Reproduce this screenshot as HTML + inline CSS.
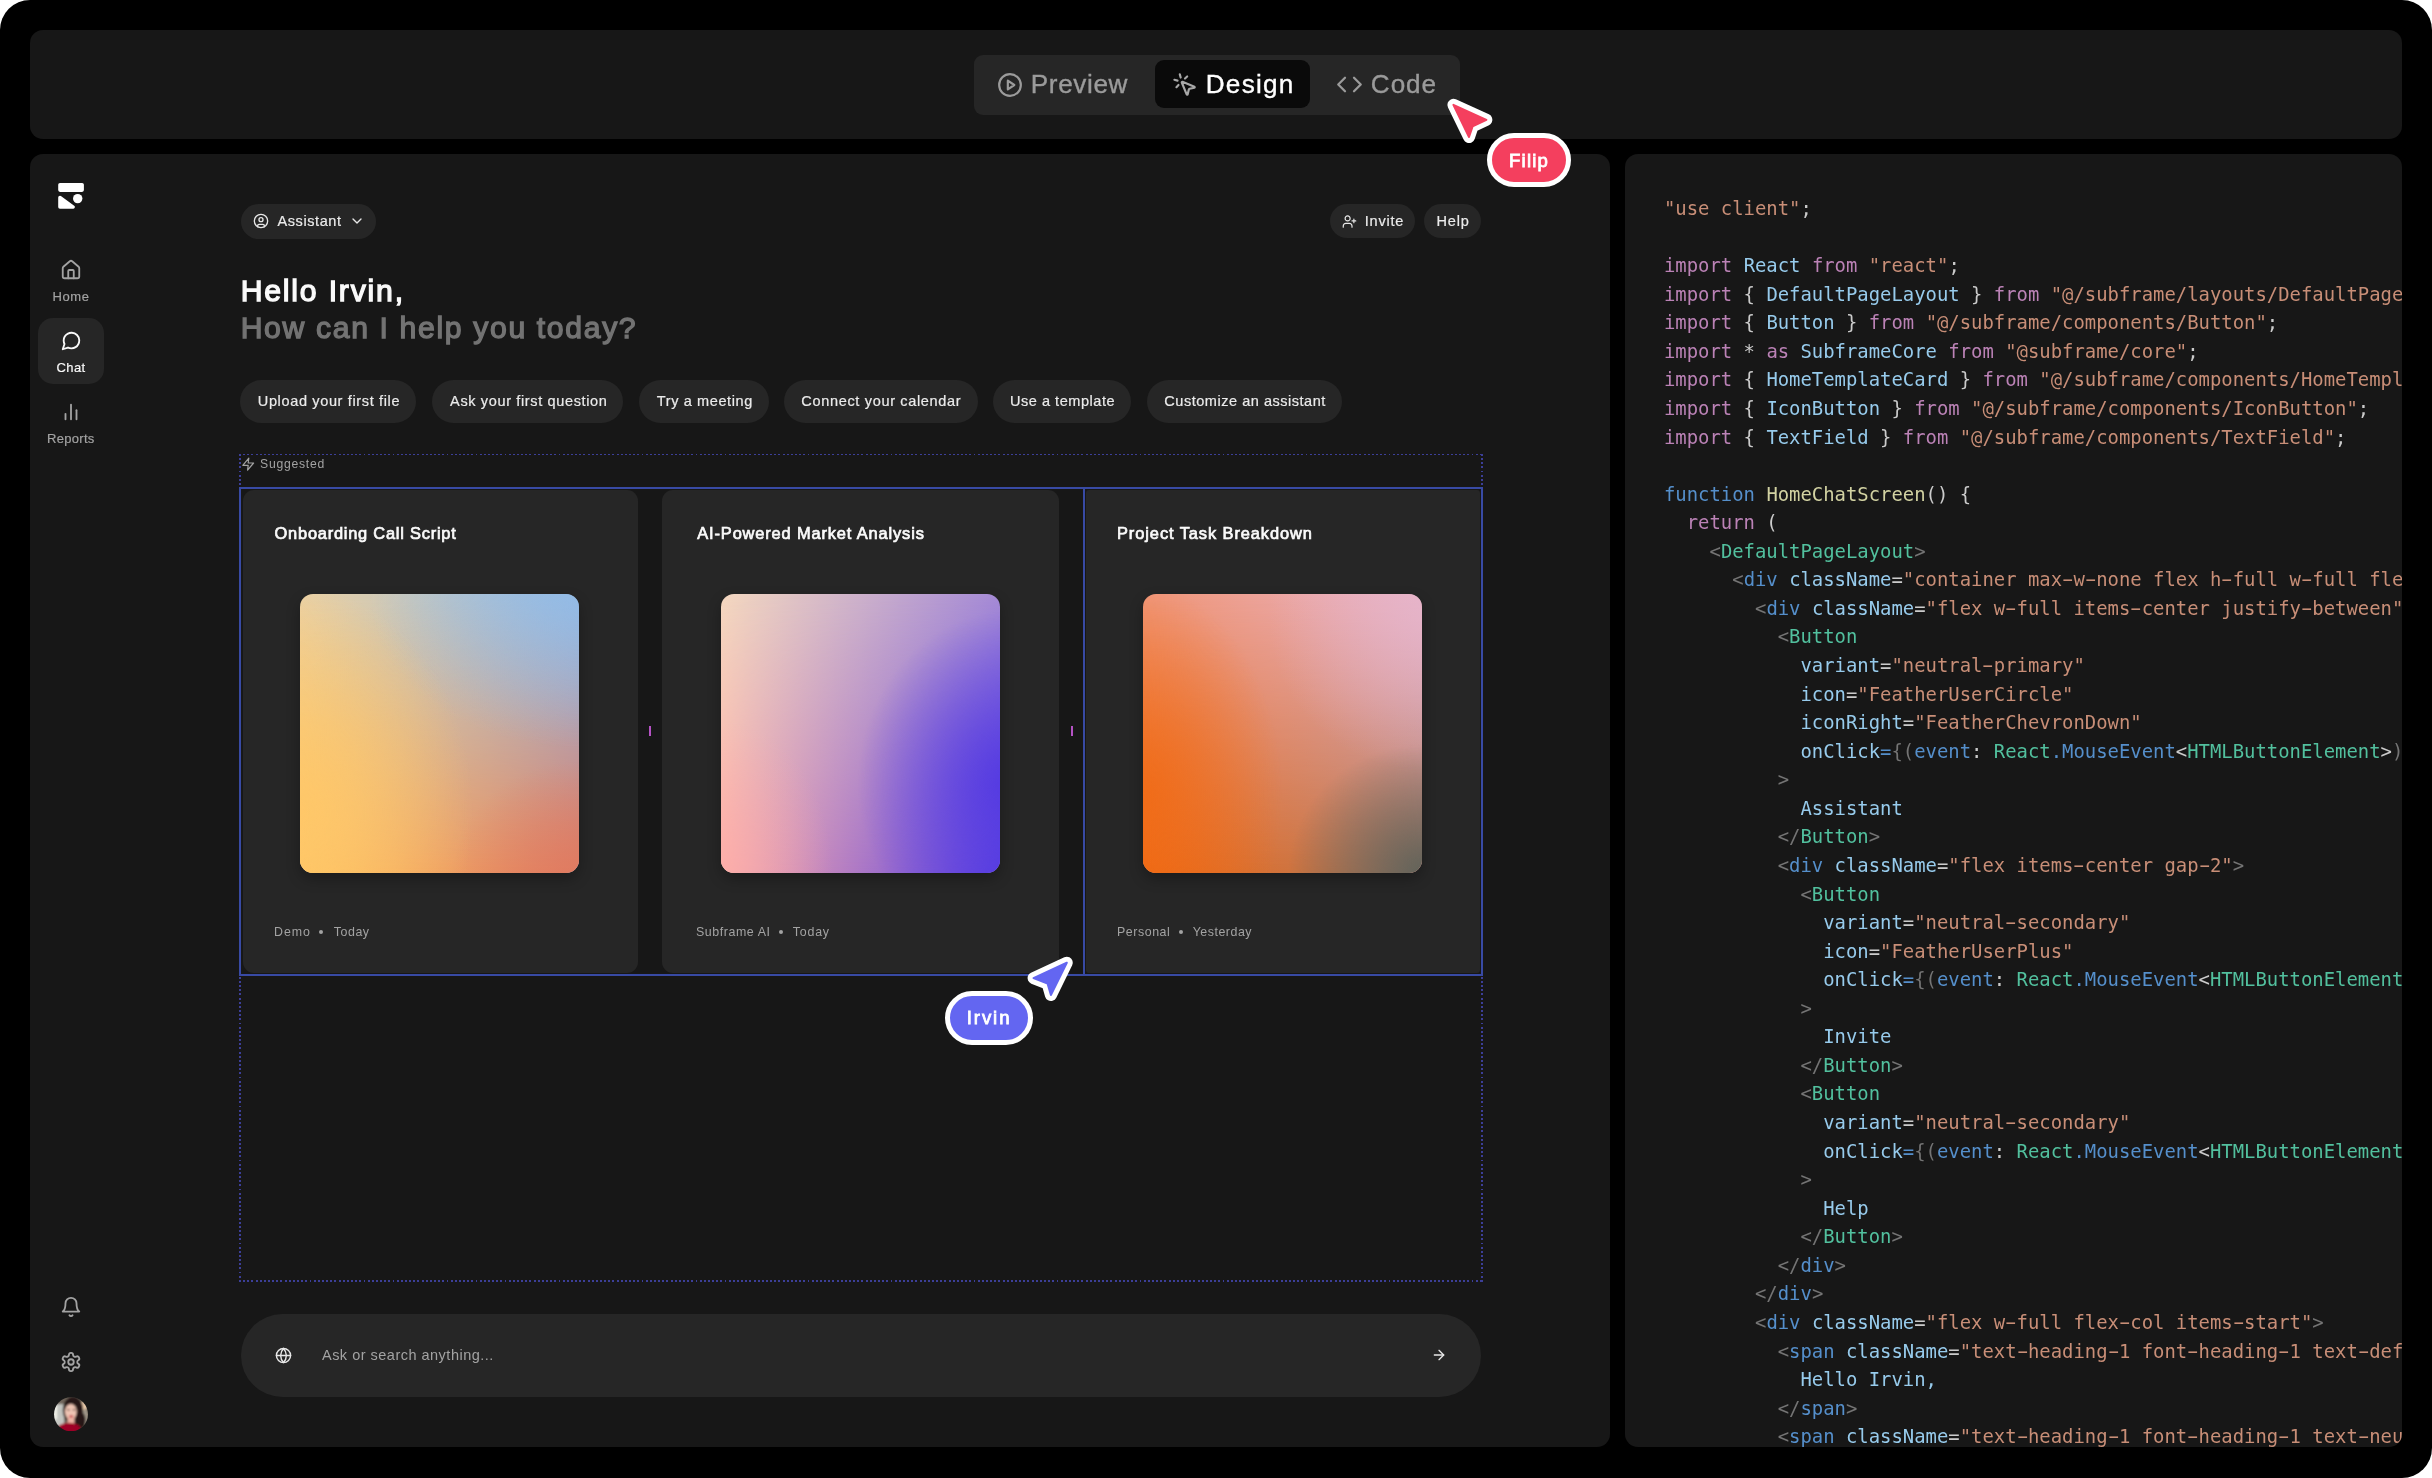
<!DOCTYPE html>
<html lang="en">
<head>
<meta charset="utf-8">
<title>Subframe – Design</title>
<style>
*{box-sizing:border-box;margin:0;padding:0}
html,body{width:2432px;height:1478px;overflow:hidden;background:#fff}
body{font-family:"Liberation Sans", sans-serif;position:relative;-webkit-font-smoothing:antialiased}
.abs,.ic,.t{position:absolute}
.t{white-space:nowrap;line-height:1em;display:block}
#texts{position:absolute;left:0;top:0;width:2432px;height:1478px;will-change:transform}
.frame{left:0;top:0;width:2432px;height:1478px;background:#000;border-radius:30px}
.panel{background:#171717;border-radius:13px}
.pill{background:#262626;border-radius:999px}
.card{background:#262626;border-radius:11px;top:490px;height:483px}
.img{top:593.7px;width:279.3px;height:279px;border-radius:13px;overflow:hidden;box-shadow:0 6px 14px rgba(0,0,0,.28)}
.img i{position:absolute;inset:0;display:block}
.sel{border:2.6px solid #384aa4}
.dot{width:4px;height:4px;border-radius:50%;background:#a3a3a3;top:929.5px}
.codewrap{left:1625px;top:154px;width:777px;height:1293px;overflow:hidden;border-radius:13px;background:#171717}
.code{position:absolute;left:39px;top:39.76px;font-family:"DejaVu Sans Mono", "Liberation Mono", monospace;font-size:18.9px;line-height:28.575px;color:#cbcbcb;will-change:transform}
.cl{height:28.575px;white-space:pre}
.h{display:inline-block;font-style:normal;transform:scaleX(1.8)}
</style>
</head>
<body>
<div class="abs frame"></div>

<!-- top bar -->
<div class="abs panel" style="left:30px;top:30px;width:2372px;height:108.5px"></div>
<div class="abs" style="left:974px;top:55px;width:486px;height:59.5px;background:#262626;border-radius:9px"></div>
<div class="abs" style="left:1155px;top:60px;width:155px;height:48px;background:#0a0a0a;border-radius:9px"></div>

<!-- main design panel -->
<div class="abs panel" style="left:30px;top:154px;width:1580px;height:1293px"></div>

<!-- sidebar -->
<svg class="abs" style="left:58px;top:183px;width:26px;height:26px" viewBox="0 0 26 26">
  <rect x="0.2" y="0" width="25.7" height="8.9" rx="1.8" fill="#fff"/>
  <path d="M1.9 14.4 L15.2 24.1 L1.9 24.1 Z" fill="#fff" stroke="#fff" stroke-width="3.4" stroke-linejoin="round"/>
  <circle cx="19.7" cy="15.6" r="4.7" fill="#fff"/>
</svg>
<div class="abs" style="left:37.5px;top:317.5px;width:66px;height:66.5px;background:#262626;border-radius:15px"></div>

<!-- avatar -->
<svg class="abs" style="left:53.7px;top:1396.6px;width:34px;height:34.4px" viewBox="0 0 34 34">
  <defs><clipPath id="avc"><circle cx="17" cy="17" r="17"/></clipPath><filter id="avb" x="-20%" y="-20%" width="140%" height="140%"><feGaussianBlur stdDeviation="1.1"/></filter></defs>
  <g clip-path="url(#avc)"><g filter="url(#avb)">
    <rect x="-4" y="-4" width="42" height="42" fill="#6f655a"/>
    <rect x="-2" y="7" width="12" height="22" fill="#c4c6c1"/>
    <rect x="0" y="8" width="3" height="14" fill="#f2f2ea"/>
    <ellipse cx="29.5" cy="8.5" rx="4" ry="4.5" fill="#eccdad"/>
    <ellipse cx="31" cy="20" rx="3" ry="8" fill="#a39a8c"/>
    <ellipse cx="19" cy="13" rx="10.2" ry="13.6" fill="#261815"/>
    <ellipse cx="26" cy="23" rx="5.5" ry="9" fill="#261815"/>
    <ellipse cx="16.8" cy="14.6" rx="5.9" ry="7.8" fill="#f0c5b4"/>
    <rect x="13.5" y="20" width="7" height="7.5" fill="#eeb4a4"/>
    <ellipse cx="14.4" cy="12.6" rx="1.5" ry="0.7" fill="#5a3d33"/>
    <ellipse cx="20" cy="12.6" rx="1.5" ry="0.7" fill="#5a3d33"/>
    <ellipse cx="17.2" cy="19.2" rx="2.3" ry="1.1" fill="#c9454f"/>
    <ellipse cx="15" cy="32.5" rx="12" ry="7" fill="#9e0028"/>
  </g></g>
</svg>

<!-- header buttons -->
<div class="abs pill" style="left:240.6px;top:204px;width:135.6px;height:34.6px"></div>
<div class="abs pill" style="left:1330.3px;top:204.3px;width:85px;height:33.8px"></div>
<div class="abs pill" style="left:1424.2px;top:204.3px;width:56.6px;height:33.8px"></div>

<!-- chips -->
<div class="abs pill" style="left:240.2px;top:380px;width:176px;height:42.6px"></div>
<div class="abs pill" style="left:432.2px;top:380px;width:191px;height:42.6px"></div>
<div class="abs pill" style="left:639.2px;top:380px;width:129.5px;height:42.6px"></div>
<div class="abs pill" style="left:784.2px;top:380px;width:193.5px;height:42.6px"></div>
<div class="abs pill" style="left:993.2px;top:380px;width:138px;height:42.6px"></div>
<div class="abs pill" style="left:1147.2px;top:380px;width:195px;height:42.6px"></div>

<!-- dotted selection outline -->
<div class="abs" style="left:239px;top:453.95px;width:1243.7px;height:1.5px;background:repeating-linear-gradient(90deg,#3c3f98 0 1.9px,transparent 1.9px 4.15px)"></div>
<div class="abs" style="left:239px;top:1280.25px;width:1243.7px;height:1.5px;background:repeating-linear-gradient(90deg,#3c3f98 0 1.9px,transparent 1.9px 4.15px)"></div>
<div class="abs" style="left:239.05px;top:454px;width:1.5px;height:827.5px;background:repeating-linear-gradient(180deg,#3c3f98 0 1.9px,transparent 1.9px 4.15px)"></div>
<div class="abs" style="left:1481.15px;top:454px;width:1.5px;height:827.5px;background:repeating-linear-gradient(180deg,#3c3f98 0 1.9px,transparent 1.9px 4.15px)"></div>

<!-- cards -->
<div class="abs card" style="left:242.5px;width:395.5px"></div>
<div class="abs card" style="left:662px;width:397px"></div>
<div class="abs card" style="left:1086px;width:394px;border-radius:3px;top:490.2px;height:482.6px"></div>

<div class="abs img" style="left:299.5px">
  <i style="background:linear-gradient(90deg,#ebd1a4,#93bbe6)"></i>
  <i style="background:linear-gradient(90deg,#ffc662,#e07c62);-webkit-mask-image:linear-gradient(180deg,transparent,#000);mask-image:linear-gradient(180deg,transparent,#000)"></i>
  <i style="background:radial-gradient(ellipse 62% 80% at 0% 78%,rgba(255,199,104,.95),rgba(255,199,104,0) 100%),radial-gradient(ellipse 75% 55% at 100% 0%,rgba(147,187,230,.75),rgba(147,187,230,0) 100%),radial-gradient(ellipse 45% 40% at 100% 100%,rgba(224,122,96,.7),rgba(224,122,96,0) 100%)"></i>
</div>
<div class="abs img" style="left:721.1px">
  <i style="background:linear-gradient(90deg,#f4d8c0,#a58ad6)"></i>
  <i style="background:linear-gradient(90deg,#fdaea9,#5a40e2);-webkit-mask-image:linear-gradient(180deg,transparent,#000);mask-image:linear-gradient(180deg,transparent,#000)"></i>
  <i style="background:radial-gradient(ellipse 55% 62% at 104% 68%,rgba(82,56,226,.95),rgba(82,56,226,0) 100%),radial-gradient(ellipse 40% 55% at 0% 100%,rgba(253,174,169,.6),rgba(253,174,169,0) 100%)"></i>
</div>
<div class="abs img" style="left:1143.1px">
  <i style="background:linear-gradient(90deg,#f09678,#e8b5ca)"></i>
  <i style="background:linear-gradient(90deg,#f06a14,#b07a62);-webkit-mask-image:linear-gradient(180deg,transparent,#000);mask-image:linear-gradient(180deg,transparent,#000)"></i>
  <i style="background:radial-gradient(ellipse 48% 46% at 100% 100%,rgba(98,99,90,1),rgba(98,99,90,0) 100%),radial-gradient(ellipse 50% 75% at 0% 72%,rgba(240,106,20,.85),rgba(240,106,20,0) 100%),radial-gradient(ellipse 55% 55% at 100% 8%,rgba(230,180,202,.7),rgba(230,180,202,0) 100%)"></i>
</div>

<div class="abs dot" style="left:318.5px"></div>
<div class="abs dot" style="left:778.5px"></div>
<div class="abs dot" style="left:1179px"></div>

<!-- selection rectangles -->
<div class="abs sel" style="left:238.9px;top:487.2px;width:846.6px;height:488.8px"></div>
<div class="abs sel" style="left:1082.9px;top:487.2px;width:400.1px;height:488.8px"></div>
<div class="abs" style="left:649px;top:726px;width:2px;height:10px;background:#b552c4"></div>
<div class="abs" style="left:1071px;top:726px;width:2px;height:10px;background:#b552c4"></div>

<!-- input -->
<div class="abs pill" style="left:241px;top:1314px;width:1240px;height:83px"></div>

<!-- code panel -->
<div class="abs codewrap"><div class="code">
<div class="cl"><span style="color:#c88e77">"use client"</span>;</div>
<div class="cl">&nbsp;</div>
<div class="cl"><span style="color:#bb82b6">import</span> <span style="color:#97cbec">React</span> <span style="color:#bb82b6">from</span> <span style="color:#c88e77">"react"</span>;</div>
<div class="cl"><span style="color:#bb82b6">import</span> { <span style="color:#97cbec">DefaultPageLayout</span> } <span style="color:#bb82b6">from</span> <span style="color:#c88e77">"@/subframe/layouts/DefaultPageLayout"</span>;</div>
<div class="cl"><span style="color:#bb82b6">import</span> { <span style="color:#97cbec">Button</span> } <span style="color:#bb82b6">from</span> <span style="color:#c88e77">"@/subframe/components/Button"</span>;</div>
<div class="cl"><span style="color:#bb82b6">import</span> * <span style="color:#bb82b6">as</span> <span style="color:#97cbec">SubframeCore</span> <span style="color:#bb82b6">from</span> <span style="color:#c88e77">"@subframe/core"</span>;</div>
<div class="cl"><span style="color:#bb82b6">import</span> { <span style="color:#97cbec">HomeTemplateCard</span> } <span style="color:#bb82b6">from</span> <span style="color:#c88e77">"@/subframe/components/HomeTemplateCard"</span>;</div>
<div class="cl"><span style="color:#bb82b6">import</span> { <span style="color:#97cbec">IconButton</span> } <span style="color:#bb82b6">from</span> <span style="color:#c88e77">"@/subframe/components/IconButton"</span>;</div>
<div class="cl"><span style="color:#bb82b6">import</span> { <span style="color:#97cbec">TextField</span> } <span style="color:#bb82b6">from</span> <span style="color:#c88e77">"@/subframe/components/TextField"</span>;</div>
<div class="cl">&nbsp;</div>
<div class="cl"><span style="color:#558fcb">function</span> <span style="color:#d2d2a2">HomeChatScreen</span>() {</div>
<div class="cl">  <span style="color:#bb82b6">return</span> (</div>
<div class="cl">    <span style="color:#747474">&lt;</span><span style="color:#52c09e">DefaultPageLayout</span><span style="color:#747474">&gt;</span></div>
<div class="cl">      <span style="color:#747474">&lt;</span><span style="color:#558fcb">div</span> <span style="color:#97cbec">className</span>=<span style="color:#c88e77">"container max<i class="h">-</i>w<i class="h">-</i>none flex h<i class="h">-</i>full w<i class="h">-</i>full flex<i class="h">-</i>col items<i class="h">-</i>start gap<i class="h">-</i>6"</span><span style="color:#747474">&gt;</span></div>
<div class="cl">        <span style="color:#747474">&lt;</span><span style="color:#558fcb">div</span> <span style="color:#97cbec">className</span>=<span style="color:#c88e77">"flex w<i class="h">-</i>full items<i class="h">-</i>center justify<i class="h">-</i>between"</span><span style="color:#747474">&gt;</span></div>
<div class="cl">          <span style="color:#747474">&lt;</span><span style="color:#52c09e">Button</span></div>
<div class="cl">            <span style="color:#97cbec">variant</span>=<span style="color:#c88e77">"neutral<i class="h">-</i>primary"</span></div>
<div class="cl">            <span style="color:#97cbec">icon</span>=<span style="color:#c88e77">"FeatherUserCircle"</span></div>
<div class="cl">            <span style="color:#97cbec">iconRight</span>=<span style="color:#c88e77">"FeatherChevronDown"</span></div>
<div class="cl">            <span style="color:#97cbec">onClick</span><span style="color:#558fcb">=</span><span style="color:#747474">{(</span><span style="color:#558fcb">event</span>: <span style="color:#52c09e">React</span><span style="color:#558fcb">.MouseEvent</span>&lt;<span style="color:#52c09e">HTMLButtonElement</span>&gt;<span style="color:#747474">)</span> <span style="color:#558fcb">=&gt;</span> <span style="color:#747474">{}}</span></div>
<div class="cl">          <span style="color:#747474">&gt;</span></div>
<div class="cl">            <span style="color:#97cbec">Assistant</span></div>
<div class="cl">          <span style="color:#747474">&lt;/</span><span style="color:#52c09e">Button</span><span style="color:#747474">&gt;</span></div>
<div class="cl">          <span style="color:#747474">&lt;</span><span style="color:#558fcb">div</span> <span style="color:#97cbec">className</span>=<span style="color:#c88e77">"flex items<i class="h">-</i>center gap<i class="h">-</i>2"</span><span style="color:#747474">&gt;</span></div>
<div class="cl">            <span style="color:#747474">&lt;</span><span style="color:#52c09e">Button</span></div>
<div class="cl">              <span style="color:#97cbec">variant</span>=<span style="color:#c88e77">"neutral<i class="h">-</i>secondary"</span></div>
<div class="cl">              <span style="color:#97cbec">icon</span>=<span style="color:#c88e77">"FeatherUserPlus"</span></div>
<div class="cl">              <span style="color:#97cbec">onClick</span><span style="color:#558fcb">=</span><span style="color:#747474">{(</span><span style="color:#558fcb">event</span>: <span style="color:#52c09e">React</span><span style="color:#558fcb">.MouseEvent</span>&lt;<span style="color:#52c09e">HTMLButtonElement</span>&gt;<span style="color:#747474">)</span> <span style="color:#558fcb">=&gt;</span> <span style="color:#747474">{}}</span></div>
<div class="cl">            <span style="color:#747474">&gt;</span></div>
<div class="cl">              <span style="color:#97cbec">Invite</span></div>
<div class="cl">            <span style="color:#747474">&lt;/</span><span style="color:#52c09e">Button</span><span style="color:#747474">&gt;</span></div>
<div class="cl">            <span style="color:#747474">&lt;</span><span style="color:#52c09e">Button</span></div>
<div class="cl">              <span style="color:#97cbec">variant</span>=<span style="color:#c88e77">"neutral<i class="h">-</i>secondary"</span></div>
<div class="cl">              <span style="color:#97cbec">onClick</span><span style="color:#558fcb">=</span><span style="color:#747474">{(</span><span style="color:#558fcb">event</span>: <span style="color:#52c09e">React</span><span style="color:#558fcb">.MouseEvent</span>&lt;<span style="color:#52c09e">HTMLButtonElement</span>&gt;<span style="color:#747474">)</span> <span style="color:#558fcb">=&gt;</span> <span style="color:#747474">{}}</span></div>
<div class="cl">            <span style="color:#747474">&gt;</span></div>
<div class="cl">              <span style="color:#97cbec">Help</span></div>
<div class="cl">            <span style="color:#747474">&lt;/</span><span style="color:#52c09e">Button</span><span style="color:#747474">&gt;</span></div>
<div class="cl">          <span style="color:#747474">&lt;/</span><span style="color:#558fcb">div</span><span style="color:#747474">&gt;</span></div>
<div class="cl">        <span style="color:#747474">&lt;/</span><span style="color:#558fcb">div</span><span style="color:#747474">&gt;</span></div>
<div class="cl">        <span style="color:#747474">&lt;</span><span style="color:#558fcb">div</span> <span style="color:#97cbec">className</span>=<span style="color:#c88e77">"flex w<i class="h">-</i>full flex<i class="h">-</i>col items<i class="h">-</i>start"</span><span style="color:#747474">&gt;</span></div>
<div class="cl">          <span style="color:#747474">&lt;</span><span style="color:#558fcb">span</span> <span style="color:#97cbec">className</span>=<span style="color:#c88e77">"text<i class="h">-</i>heading<i class="h">-</i>1 font<i class="h">-</i>heading<i class="h">-</i>1 text<i class="h">-</i>default<i class="h">-</i>font"</span><span style="color:#747474">&gt;</span></div>
<div class="cl">            <span style="color:#97cbec">Hello Irvin,</span></div>
<div class="cl">          <span style="color:#747474">&lt;/</span><span style="color:#558fcb">span</span><span style="color:#747474">&gt;</span></div>
<div class="cl">          <span style="color:#747474">&lt;</span><span style="color:#558fcb">span</span> <span style="color:#97cbec">className</span>=<span style="color:#c88e77">"text<i class="h">-</i>heading<i class="h">-</i>1 font<i class="h">-</i>heading<i class="h">-</i>1 text<i class="h">-</i>neutral<i class="h">-</i>500"</span><span style="color:#747474">&gt;</span></div>
</div></div>

<svg class="ic" style="left:997.30px;top:71.60px;width:26px;height:26px" viewBox="0 0 24 24" fill="none" stroke="#9b9b9b" stroke-width="2" stroke-linecap="round" stroke-linejoin="round" ><circle cx="12" cy="12" r="10"/><path d="m10 8 6 4-6 4z"/></svg>
<svg class="ic" style="left:1171.50px;top:71.90px;width:26px;height:26px" viewBox="0 0 24 24" fill="none" stroke="#a8a8a8" stroke-width="2" stroke-linecap="round" stroke-linejoin="round" ><path d="M14 4.1 12 6"/><path d="m5.1 8-2.9-.8"/><path d="m6 12-1.9 2"/><path d="M7.2 2.2 8 5.1"/><path d="M9.037 9.69a.498.498 0 0 1 .653-.653l11 4.5a.5.5 0 0 1-.074.949l-4.349 1.041a1 1 0 0 0-.74.739l-1.04 4.35a.5.5 0 0 1-.95.074z"/></svg>
<svg class="ic" style="left:1335.70px;top:70.50px;width:27px;height:27px" viewBox="0 0 24 24" fill="none" stroke="#9b9b9b" stroke-width="2" stroke-linecap="round" stroke-linejoin="round" ><path d="m16 18 6-6-6-6"/><path d="m8 6-6 6 6 6"/></svg>
<svg class="ic" style="left:60.00px;top:258.50px;width:22px;height:22px" viewBox="0 0 24 24" fill="none" stroke="#a3a3a3" stroke-width="2" stroke-linecap="round" stroke-linejoin="round" ><path d="M15 21v-8a1 1 0 0 0-1-1h-4a1 1 0 0 0-1 1v8"/><path d="M3 10a2 2 0 0 1 .709-1.528l7-5.999a2 2 0 0 1 2.582 0l7 5.999A2 2 0 0 1 21 10v9a2 2 0 0 1-2 2H5a2 2 0 0 1-2-2z"/></svg>
<svg class="ic" style="left:60.00px;top:329.70px;width:22px;height:22px" viewBox="0 0 24 24" fill="none" stroke="#fafafa" stroke-width="2" stroke-linecap="round" stroke-linejoin="round" ><path d="M21 11.5a8.38 8.38 0 0 1-.9 3.8 8.5 8.5 0 0 1-7.6 4.7 8.38 8.38 0 0 1-3.8-.9L3 21l1.9-5.7a8.38 8.38 0 0 1-.9-3.8 8.5 8.5 0 0 1 4.7-7.6 8.38 8.38 0 0 1 3.8-.9h.5a8.48 8.48 0 0 1 8 8v.5z"/></svg>
<svg class="ic" style="left:60.00px;top:400.60px;width:22px;height:22px" viewBox="0 0 24 24" fill="none" stroke="#a3a3a3" stroke-width="2" stroke-linecap="round" stroke-linejoin="round" ><path d="M18 20V10"/><path d="M12 20V4"/><path d="M6 20v-6"/></svg>
<svg class="ic" style="left:59.50px;top:1296.00px;width:22px;height:22px" viewBox="0 0 24 24" fill="none" stroke="#a3a3a3" stroke-width="2" stroke-linecap="round" stroke-linejoin="round" ><path d="M6 8a6 6 0 0 1 12 0c0 7 3 9 3 9H3s3-2 3-9"/><path d="M10.3 21a1.94 1.94 0 0 0 3.4 0"/></svg>
<svg class="ic" style="left:59.50px;top:1350.50px;width:22px;height:22px" viewBox="0 0 24 24" fill="none" stroke="#a3a3a3" stroke-width="2" stroke-linecap="round" stroke-linejoin="round" ><path d="M12.22 2h-.44a2 2 0 0 0-2 2v.18a2 2 0 0 1-1 1.73l-.43.25a2 2 0 0 1-2 0l-.15-.08a2 2 0 0 0-2.73.73l-.22.38a2 2 0 0 0 .73 2.73l.15.1a2 2 0 0 1 1 1.72v.51a2 2 0 0 1-1 1.74l-.15.09a2 2 0 0 0-.73 2.73l.22.38a2 2 0 0 0 2.73.73l.15-.08a2 2 0 0 1 2 0l.43.25a2 2 0 0 1 1 1.73V20a2 2 0 0 0 2 2h.44a2 2 0 0 0 2-2v-.18a2 2 0 0 1 1-1.73l.43-.25a2 2 0 0 1 2 0l.15.08a2 2 0 0 0 2.73-.73l.22-.39a2 2 0 0 0-.73-2.73l-.15-.08a2 2 0 0 1-1-1.74v-.5a2 2 0 0 1 1-1.74l.15-.09a2 2 0 0 0 .73-2.73l-.22-.38a2 2 0 0 0-2.73-.73l-.15.08a2 2 0 0 1-2 0l-.43-.25a2 2 0 0 1-1-1.73V4a2 2 0 0 0-2-2z"/><circle cx="12" cy="12" r="3"/></svg>
<svg class="ic" style="left:253.00px;top:213.00px;width:16px;height:16px" viewBox="0 0 24 24" fill="none" stroke="#e8e8e8" stroke-width="2" stroke-linecap="round" stroke-linejoin="round" ><circle cx="12" cy="12" r="10"/><circle cx="12" cy="10" r="3"/><path d="M7 20.662V19a2 2 0 0 1 2-2h6a2 2 0 0 1 2 2v1.662"/></svg>
<svg class="ic" style="left:348.80px;top:213.10px;width:16px;height:16px" viewBox="0 0 24 24" fill="none" stroke="#e8e8e8" stroke-width="2" stroke-linecap="round" stroke-linejoin="round" ><path d="m6 9 6 6 6-6"/></svg>
<svg class="ic" style="left:1341.90px;top:213.50px;width:15px;height:15px" viewBox="0 0 24 24" fill="none" stroke="#e8e8e8" stroke-width="1.9" stroke-linecap="round" stroke-linejoin="round" ><path d="M16 21v-2a4 4 0 0 0-4-4H6a4 4 0 0 0-4 4v2"/><circle cx="9" cy="7" r="4"/><path d="M19 8v6"/><path d="M22 11h-6"/></svg>
<svg class="ic" style="left:241.30px;top:457.20px;width:14.4px;height:14.4px" viewBox="0 0 24 24" fill="none" stroke="#a3a3a3" stroke-width="2" stroke-linecap="round" stroke-linejoin="round" ><path d="M13 2 3 14h9l-1 8 10-12h-9z"/></svg>
<svg class="ic" style="left:274.50px;top:1346.50px;width:17px;height:17px" viewBox="0 0 24 24" fill="none" stroke="#e8e8e8" stroke-width="2" stroke-linecap="round" stroke-linejoin="round" ><circle cx="12" cy="12" r="10"/><path d="M12 2a14.5 14.5 0 0 0 0 20 14.5 14.5 0 0 0 0-20"/><path d="M2 12h20"/></svg>
<svg class="ic" style="left:1431.00px;top:1347.00px;width:16px;height:16px" viewBox="0 0 24 24" fill="none" stroke="#e8e8e8" stroke-width="2" stroke-linecap="round" stroke-linejoin="round" ><path d="M5 12h14"/><path d="m12 5 7 7-7 7"/></svg>

<!-- cursors -->
<svg class="abs" style="left:1443px;top:94px;width:54px;height:54px;overflow:visible" viewBox="0 0 54 54">
  <path d="M10.4 10.8 L43.4 25.8 L29.6 32.4 L26 43 Z" fill="#fff" stroke="#fff" stroke-width="12" stroke-linejoin="round"/>
  <path d="M10.4 10.8 L43.4 25.8 L29.6 32.4 L26 43 Z" fill="#f43f5e" stroke="#f43f5e" stroke-width="2" stroke-linejoin="round"/>
</svg>
<div class="abs" style="left:1486.8px;top:133.2px;width:84.4px;height:54px;border-radius:27px;background:#f43f5e;border:5px solid #fff"></div>

<svg class="abs" style="left:1023px;top:952px;width:54px;height:54px;overflow:visible" viewBox="0 0 54 54">
  <path d="M43.8 10.7 L10.5 26.1 L24.6 31.6 L27.9 43 Z" fill="#fff" stroke="#fff" stroke-width="12" stroke-linejoin="round"/>
  <path d="M43.8 10.7 L10.5 26.1 L24.6 31.6 L27.9 43 Z" fill="#6366f1" stroke="#6366f1" stroke-width="2" stroke-linejoin="round"/>
</svg>
<div class="abs" style="left:945px;top:991.2px;width:88.3px;height:54px;border-radius:27px;background:#6366f1;border:5px solid #fff"></div>

<div id="texts">
<span class="t" id="t_prev" style="left:1030.74px;top:70.82px;font-size:26.1px;font-weight:400;color:#9b9b9b;-webkit-text-stroke:0.37px #9b9b9b;letter-spacing:0.651px">Preview</span>
<span class="t" id="t_des" style="left:1205.74px;top:70.82px;font-size:26.1px;font-weight:400;color:#ffffff;-webkit-text-stroke:0.37px #ffffff;letter-spacing:1.269px">Design</span>
<span class="t" id="t_code" style="left:1370.86px;top:70.82px;font-size:26.1px;font-weight:400;color:#9b9b9b;-webkit-text-stroke:0.37px #9b9b9b;letter-spacing:0.946px">Code</span>
<span class="t" id="s_home" style="left:52.42px;top:290.10px;font-size:13px;font-weight:400;color:#a3a3a3;-webkit-text-stroke:0.18px #a3a3a3;letter-spacing:0.595px">Home</span>
<span class="t" id="s_chat" style="left:56.43px;top:361.10px;font-size:13px;font-weight:400;color:#fafafa;-webkit-text-stroke:0.18px #fafafa;letter-spacing:0.438px">Chat</span>
<span class="t" id="s_rep" style="left:47.02px;top:432.10px;font-size:13px;font-weight:400;color:#a3a3a3;-webkit-text-stroke:0.18px #a3a3a3;letter-spacing:0.306px">Reports</span>
<span class="t" id="assist" style="left:277.47px;top:213.92px;font-size:14.5px;font-weight:400;color:#ebebeb;-webkit-text-stroke:0.20px #ebebeb;letter-spacing:0.588px">Assistant</span>
<span class="t" id="invite" style="left:1364.76px;top:213.92px;font-size:14.5px;font-weight:400;color:#ebebeb;-webkit-text-stroke:0.20px #ebebeb;letter-spacing:0.804px">Invite</span>
<span class="t" id="help" style="left:1436.51px;top:213.92px;font-size:14.5px;font-weight:400;color:#ebebeb;-webkit-text-stroke:0.20px #ebebeb;letter-spacing:0.858px">Help</span>
<span class="t" id="hello" style="left:240.67px;top:275.59px;font-size:30.2px;font-weight:400;color:#fafafa;-webkit-text-stroke:1.30px #fafafa;letter-spacing:1.800px">Hello Irvin,</span>
<span class="t" id="how" style="left:240.67px;top:313.19px;font-size:30.2px;font-weight:400;color:#737373;-webkit-text-stroke:1.30px #737373;letter-spacing:1.635px">How can I help you today?</span>
<span class="t" id="chip0" style="left:257.78px;top:394.32px;font-size:14.5px;font-weight:400;color:#ebebeb;-webkit-text-stroke:0.20px #ebebeb;letter-spacing:0.649px">Upload your first file</span>
<span class="t" id="chip1" style="left:450.07px;top:394.32px;font-size:14.5px;font-weight:400;color:#ebebeb;-webkit-text-stroke:0.20px #ebebeb;letter-spacing:0.642px">Ask your first question</span>
<span class="t" id="chip2" style="left:656.78px;top:394.32px;font-size:14.5px;font-weight:400;color:#ebebeb;-webkit-text-stroke:0.20px #ebebeb;letter-spacing:0.621px">Try a meeting</span>
<span class="t" id="chip3" style="left:801.37px;top:394.32px;font-size:14.5px;font-weight:400;color:#ebebeb;-webkit-text-stroke:0.20px #ebebeb;letter-spacing:0.669px">Connect your calendar</span>
<span class="t" id="chip4" style="left:1009.98px;top:394.32px;font-size:14.5px;font-weight:400;color:#ebebeb;-webkit-text-stroke:0.20px #ebebeb;letter-spacing:0.541px">Use a template</span>
<span class="t" id="chip5" style="left:1164.37px;top:394.32px;font-size:14.5px;font-weight:400;color:#ebebeb;-webkit-text-stroke:0.20px #ebebeb;letter-spacing:0.526px">Customize an assistant</span>
<span class="t" id="sugg" style="left:260.05px;top:457.67px;font-size:12.2px;font-weight:400;color:#a3a3a3;letter-spacing:0.733px">Suggested</span>
<span class="t" id="c1t" style="left:274.58px;top:524.76px;font-size:16.4px;font-weight:400;color:#fafafa;-webkit-text-stroke:0.71px #fafafa;letter-spacing:0.776px">Onboarding Call Script</span>
<span class="t" id="c2t" style="left:697.32px;top:524.76px;font-size:16.4px;font-weight:400;color:#fafafa;-webkit-text-stroke:0.71px #fafafa;letter-spacing:0.862px">AI-Powered Market Analysis</span>
<span class="t" id="c3t" style="left:1117.01px;top:524.76px;font-size:16.4px;font-weight:400;color:#fafafa;-webkit-text-stroke:0.71px #fafafa;letter-spacing:0.923px">Project Task Breakdown</span>
<span class="t" id="c1a" style="left:273.98px;top:925.70px;font-size:12.4px;font-weight:400;color:#a3a3a3;letter-spacing:0.995px">Demo</span>
<span class="t" id="c1b" style="left:333.72px;top:925.70px;font-size:12.4px;font-weight:400;color:#a3a3a3;letter-spacing:0.560px">Today</span>
<span class="t" id="c2a" style="left:695.94px;top:925.70px;font-size:12.4px;font-weight:400;color:#a3a3a3;letter-spacing:0.584px">Subframe AI</span>
<span class="t" id="c2b" style="left:792.72px;top:925.70px;font-size:12.4px;font-weight:400;color:#a3a3a3;letter-spacing:0.810px">Today</span>
<span class="t" id="c3a" style="left:1116.98px;top:925.70px;font-size:12.4px;font-weight:400;color:#a3a3a3;letter-spacing:0.563px">Personal</span>
<span class="t" id="c3b" style="left:1192.73px;top:925.70px;font-size:12.4px;font-weight:400;color:#a3a3a3;letter-spacing:0.518px">Yesterday</span>
<span class="t" id="ask" style="left:321.97px;top:1347.93px;font-size:14.5px;font-weight:400;color:#a3a3a3;letter-spacing:0.491px">Ask or search anything...</span>
<span class="t" id="filip" style="left:1509.07px;top:152.16px;font-size:18.6px;font-weight:400;color:#ffffff;-webkit-text-stroke:0.80px #ffffff;letter-spacing:1.179px">Filip</span>
<span class="t" id="irvin" style="left:966.78px;top:1008.86px;font-size:18.6px;font-weight:400;color:#ffffff;-webkit-text-stroke:0.80px #ffffff;letter-spacing:1.900px">Irvin</span>
</div>
</body>
</html>
